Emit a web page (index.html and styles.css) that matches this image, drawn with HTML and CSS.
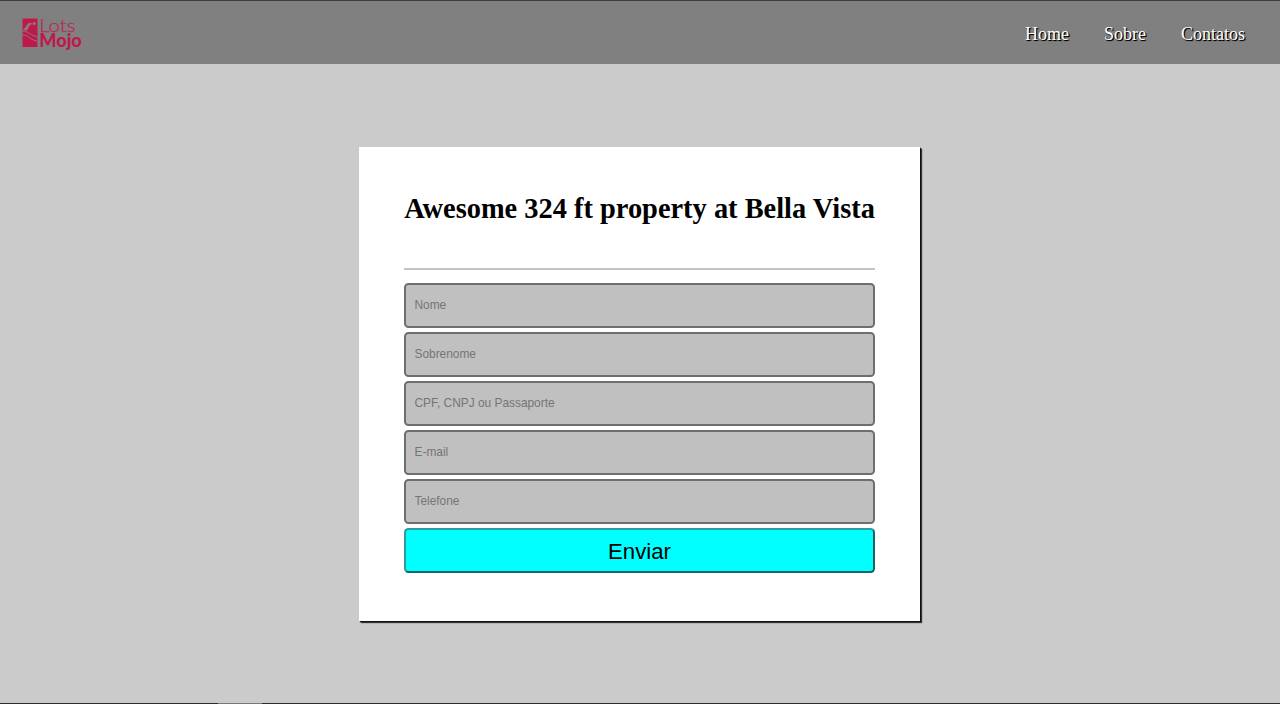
FILE: index.html
```html
<!DOCTYPE html>
<html lang="pt-BR">
<head>
<meta charset="utf-8">
<title>Lots Mojo</title>
<link rel="stylesheet" href="styles.css">
</head>
<body>
<header class="header">
  <svg class="logo" width="62" height="36" viewBox="0 0 62 36" role="img" aria-label="Lots Mojo">
    <path class="logo-mark" d="M1.500 3.500H16.500V32H1.500Z"/>
    <path class="logo-cut" d="M1.500 14.800C4.500 13.500 4.800 10.500 7 8.800 8.500 7.500 10 7.600 11.200 8.800L9.800 9.800C7.500 10.500 7.800 14 5.500 15.800Z"/>
    <circle class="logo-cut" cx="13.200" cy="8.600" r="1.600"/>
    <path class="logo-line" d="M1.500 16.200C7 16 9.500 20.500 16.500 21.800M1.500 19.800C7 20 9.500 25 16.500 26.300"/>
    <text class="logo-light" x="18.300" y="16.500" textLength="36" lengthAdjust="spacingAndGlyphs">Lots</text>
    <text class="logo-bold" x="18.300" y="32" textLength="42.500" lengthAdjust="spacingAndGlyphs">Mojo</text>
  </svg>
  <nav class="nav">
    <a class="nav-link">Home</a>
    <a class="nav-link">Sobre</a>
    <a class="nav-link">Contatos</a>
  </nav>
</header>
<main class="main">
  <form class="card">
    <h1 class="title">Awesome 324 ft property at Bella Vista</h1>
    <hr class="rule">
    <input class="field" type="text" placeholder="Nome">
    <input class="field" type="text" placeholder="Sobrenome">
    <input class="field" type="text" placeholder="CPF, CNPJ ou Passaporte">
    <input class="field" type="text" placeholder="E-mail">
    <input class="field" type="text" placeholder="Telefone">
    <button class="submit" type="button">Enviar</button>
  </form>
</main>
<footer class="edge"><span class="edge-gap"></span></footer>
</body>
</html>
```
FILE: styles.css
```css
* { box-sizing: border-box; }
body {
  margin: 0;
  height: 704px;
  display: flex;
  flex-direction: column;
  background: #cbcbcb;
  font-family: "Liberation Serif", serif;
  overflow: hidden;
}
.header {
  height: 64px;
  flex: none;
  display: flex;
  align-items: center;
  justify-content: space-between;
  padding: 0 35px 0 21px;
  background: #808080;
  border-top: 1px solid #403e44;
}
.logo { display: block; overflow: visible; }
.logo-mark { fill: #bd1a4b; }
.logo-cut { fill: #8d7880; }
.logo-line { fill: none; stroke: #93707c; stroke-width: 1; }
.logo-light { font: 300 17.5px Lato, sans-serif; fill: #b52b54; stroke: #b52b54; stroke-width: 0.25; }
.logo-bold { font: 900 18px Lato, sans-serif; fill: #bd1a4b; }
.nav { display: flex; gap: 35px; padding-top: 2px; }
.nav-link {
  font-size: 18px;
  line-height: 20px;
  color: #fff;
  text-shadow: 1px 1px 1px #000, 1px 1px 0 #222;
}
.main {
  flex: 1;
  display: flex;
  justify-content: center;
  align-items: flex-start;
  padding-top: 83px;
}
.card {
  width: 561px;
  height: 474px;
  margin-right: 1px;
  padding: 45px 45px 0;
  display: flex;
  flex-direction: column;
  gap: 4px;
  background: #fff;
  box-shadow: 1px 1px 1px #111, 2px 2px 1px rgba(0, 0, 0, 0.7);
}
.title {
  margin: 0;
  height: 72px;
  flex: none;
  font-size: 28.42px;
  line-height: 34px;
  font-weight: 700;
  text-align: center;
  white-space: nowrap;
}
.rule {
  width: 100%;
  height: 2px;
  flex: none;
  margin: 0 0 9px;
  border: 0;
  background: #c4c4c4;
}
.field, .submit {
  width: 100%;
  height: 45px;
  flex: none;
  border-radius: 4.5px;
  font-family: "Liberation Sans", sans-serif;
}
.field {
  padding: 0 8.500px 1px;
  border: 2px solid #6e6e6e;
  background: #c0c0c0;
  font-size: 11.9px;
}
.field::placeholder { color: #757575; }
.submit {
  padding: 3px 0 0;
  border: 2px solid;
  border-color: #2c9c9f #176366 #176366 #2c9c9f;
  background: #0ff;
  color: #000;
  font-size: 22.2px;
}
.edge {
  height: 1px;
  flex: none;
  background: #302a30;
  padding-left: 218px;
}
.edge-gap { display: block; width: 44px; height: 1px; background: #777; }
```
